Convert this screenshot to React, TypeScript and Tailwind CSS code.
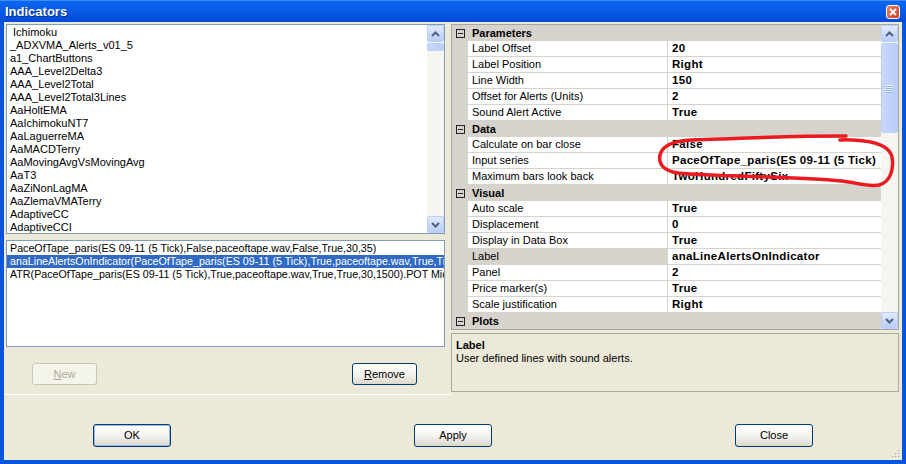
import type { ReactNode } from "react";

const indicators = [
  " Ichimoku",
  "_ADXVMA_Alerts_v01_5",
  "a1_ChartButtons",
  "AAA_Level2Delta3",
  "AAA_Level2Total",
  "AAA_Level2Total3Lines",
  "AaHoltEMA",
  "AaIchimokuNT7",
  "AaLaguerreMA",
  "AaMACDTerry",
  "AaMovingAvgVsMovingAvg",
  "AaT3",
  "AaZiNonLagMA",
  "AaZlemaVMATerry",
  "AdaptiveCC",
  "AdaptiveCCI",
];

const configured = [
  "PaceOfTape_paris(ES 09-11 (5 Tick),False,paceoftape.wav,False,True,30,35)",
  "anaLineAlertsOnIndicator(PaceOfTape_paris(ES 09-11 (5 Tick),True,paceoftape.wav,True,True,30,35)",
  "ATR(PaceOfTape_paris(ES 09-11 (5 Tick),True,paceoftape.wav,True,True,30,1500).POT Mid",
];

const sections: { name: string; rows: [string, string][] }[] = [
  {
    name: "Parameters",
    rows: [
      ["Label Offset", "20"],
      ["Label Position", "Right"],
      ["Line Width", "150"],
      ["Offset for Alerts (Units)", "2"],
      ["Sound Alert Active", "True"],
    ],
  },
  {
    name: "Data",
    rows: [
      ["Calculate on bar close", "False"],
      ["Input series", "PaceOfTape_paris(ES 09-11 (5 Tick)"],
      ["Maximum bars look back", "TwoHundredFiftySix"],
    ],
  },
  {
    name: "Visual",
    rows: [
      ["Auto scale", "True"],
      ["Displacement", "0"],
      ["Display in Data Box", "True"],
      ["Label", "anaLineAlertsOnIndicator"],
      ["Panel", "2"],
      ["Price marker(s)", "True"],
      ["Scale justification", "Right"],
    ],
  },
  { name: "Plots", rows: [] },
];

const selectedProperty = "Label";

function Chevron({ down = false }: { down?: boolean }) {
  return (
    <svg width="9" height="6" viewBox="0 0 9 6" className={down ? "rotate-180" : ""}>
      <path d="M1 5 L4.5 1.5 L8 5" fill="none" stroke="#4d6185" strokeWidth={2} />
    </svg>
  );
}

function ScrollButton({ down = false }: { down?: boolean }) {
  return (
    <div className="flex h-[17px] w-full shrink-0 items-center justify-center rounded-[2px] border border-[#bccff7] bg-linear-to-b from-[#e3ebfe] to-[#b8ccf8]">
      <Chevron down={down} />
    </div>
  );
}

function VScroll({ thumb, grip = false }: { thumb: string; grip?: boolean }) {
  return (
    <div className="flex w-[17px] shrink-0 flex-col bg-[#f6f5f0]">
      <ScrollButton />
      <div className="flex-1">
        <div
          className={`${thumb} flex flex-col items-center justify-center gap-[1px] rounded-[2px] border border-[#bccff7] bg-linear-to-r from-[#c9d8fc] to-[#b9cdf8]`}
        >
          {grip &&
            [0, 1, 2, 3].map((i) => (
              <div key={i} className="h-[1px] w-[7px] bg-[#eef3fe] shadow-[0_1px_0_#8fb0f2]" />
            ))}
        </div>
      </div>
      <ScrollButton down />
    </div>
  );
}

function XPButton({
  children,
  className = "",
  disabled = false,
}: {
  children: ReactNode;
  className?: string;
  disabled?: boolean;
}) {
  return (
    <div
      className={`flex items-center justify-center rounded-[3px] border text-[11px] ${
        disabled
          ? "border-[#c9c7ba] bg-[#f5f4ea] text-[#aca899]"
          : "border-[#003c74] bg-linear-to-b from-white via-[#f5f4ef] to-[#dcd7cb] text-black"
      } ${className}`}
    >
      {children}
    </div>
  );
}

function MinusBox() {
  return (
    <div className="flex h-[9px] w-[9px] items-center justify-center border border-[#222]">
      <div className="h-px w-[5px] bg-[#222]" />
    </div>
  );
}

function PropertyGrid() {
  return (
    <div className="flex h-[306px] border border-[#a5a5a5] bg-white">
      <div className="flex-1">
        {sections.map((s) => (
          <div key={s.name}>
            <div className="flex h-[16px] items-center bg-[#d6d3cc]">
              <div className="flex w-[16px] justify-center">
                <MinusBox />
              </div>
              <span className="pl-[4px] font-bold">{s.name}</span>
            </div>
            {s.rows.map(([label, value]) => (
              <div key={label} className="flex h-[16px]">
                <div className="w-[16px] bg-[#d6d3cc]" />
                <div
                  className={`w-[200px] border-r border-b border-[#d6d3cc] pl-[4px] leading-[15px] ${
                    label === selectedProperty ? "bg-[#d6d3cc]" : ""
                  }`}
                >
                  {label}
                </div>
                <div className="flex-1 overflow-hidden whitespace-nowrap border-b border-[#d6d3cc] pl-[4px] text-[11.5px] font-bold leading-[15px] tracking-[0.3px]">
                  {value}
                </div>
              </div>
            ))}
          </div>
        ))}
      </div>
      <VScroll thumb="mt-[1px] h-[90px]" grip />
    </div>
  );
}

function TitleBar() {
  return (
    <div className="flex h-[22px] shrink-0 items-center justify-between border-t border-[#3d8ef8] bg-linear-to-b from-[#0c66f0] via-[#075ae6] to-[#034ad8] pl-[5px] pr-[6px]">
      <span className="text-[13px] font-bold text-white [text-shadow:1px_1px_0_#0a2a8a]">Indicators</span>
      <div className="flex h-[14px] w-[14px] items-center justify-center rounded-[3px] border border-white bg-linear-to-br from-[#e8826a] to-[#c6401e]">
        <svg width="8" height="8" viewBox="0 0 8 8">
          <path d="M1 1 L7 7 M7 1 L1 7" stroke="white" strokeWidth={1.8} />
        </svg>
      </div>
    </div>
  );
}

export default function App() {
  return (
    <div className="relative flex h-[464px] w-[906px] flex-col overflow-hidden bg-[#0855dd] font-['Liberation_Sans',Arial,sans-serif] text-[11px] text-black">
      <TitleBar />

      <div className="mx-[4px] mb-[4px] flex flex-1 flex-col bg-[#ece9d8]">
        <div className="flex h-[372px]">
          {/* indicator picker + configured list */}
          <div className="flex w-[447px] flex-col pl-[2px] pt-[2px]">
            <div className="flex h-[210px] w-[439px] border border-[#7f9db9] bg-white">
              <div className="flex-1 overflow-hidden pt-[1px]">
                {indicators.map((name) => (
                  <div key={name} className="h-[13px] whitespace-pre pl-[3px] leading-[13px]">
                    {name}
                  </div>
                ))}
              </div>
              <VScroll thumb="mt-[1px] h-[8px]" />
            </div>

            <div className="mt-[6px] h-[107px] w-[439px] overflow-hidden border border-[#7f9db9] bg-white pt-[1px] text-[10.7px]">
              {configured.map((line, i) => (
                <div
                  key={line}
                  className={`h-[13px] overflow-hidden whitespace-nowrap pl-[3px] leading-[13px] ${
                    i === 1 ? "bg-[#316ac5] text-white" : ""
                  }`}
                >
                  {line}
                </div>
              ))}
            </div>

            <div className="mt-[16px] flex">
              <XPButton disabled className="ml-[26px] h-[22px] w-[65px]">
                <span className="underline">N</span>ew
              </XPButton>
              <XPButton className="ml-[255px] h-[22px] w-[65px]">
                <span className="underline">R</span>emove
              </XPButton>
            </div>
          </div>

          {/* properties + help */}
          <div className="flex w-[448px] flex-col pt-[2px]">
            <PropertyGrid />
            <div className="mt-[3px] h-[59px] border border-[#aca899] px-[4px] pt-[5px] leading-[13px]">
              <div className="font-bold">Label</div>
              <div>User defined lines with sound alerts.</div>
            </div>
          </div>
        </div>

        <div className="h-px w-[447px] bg-white" />

        <div className="relative flex flex-1 gap-[243px] pl-[89px] pt-[29px]">
          <XPButton className="h-[23px] w-[78px] shadow-[inset_0_0_0_1px_#9bb7ec]">OK</XPButton>
          <XPButton className="h-[23px] w-[78px]">Apply</XPButton>
          <XPButton className="h-[23px] w-[78px]">Close</XPButton>
          <svg className="absolute bottom-[1px] right-[1px]" width="10" height="10" viewBox="0 0 10 10">
            {[
              [8, 2],
              [8, 5],
              [5, 5],
              [8, 8],
              [5, 8],
              [2, 8],
            ].map(([x, y]) => (
              <g key={`${x}-${y}`}>
                <rect x={x} y={y} width="1.5" height="1.5" fill="#fff" />
                <rect x={x - 1} y={y - 1} width="1.5" height="1.5" fill="#b9b5a6" />
              </g>
            ))}
          </svg>
        </div>
      </div>

      {/* hand-drawn highlight around the input series */}
      <svg className="pointer-events-none absolute left-0 top-0" width="906" height="464" viewBox="0 0 906 464">
        <path
          d="M 846 136 C 800 136, 740 138, 692 140 C 672 141, 662 146, 660 155 C 658 165, 665 171, 678 173 C 722 177, 792 176, 842 181 C 858 183, 868 187, 879 185 C 891 182, 894 168, 892 157 C 890 148, 881 143, 864 141 C 854 140, 848 139, 840 140"
          fill="none"
          stroke="#ea1a1f"
          strokeWidth={3.5}
          strokeLinecap="round"
        />
      </svg>
    </div>
  );
}
